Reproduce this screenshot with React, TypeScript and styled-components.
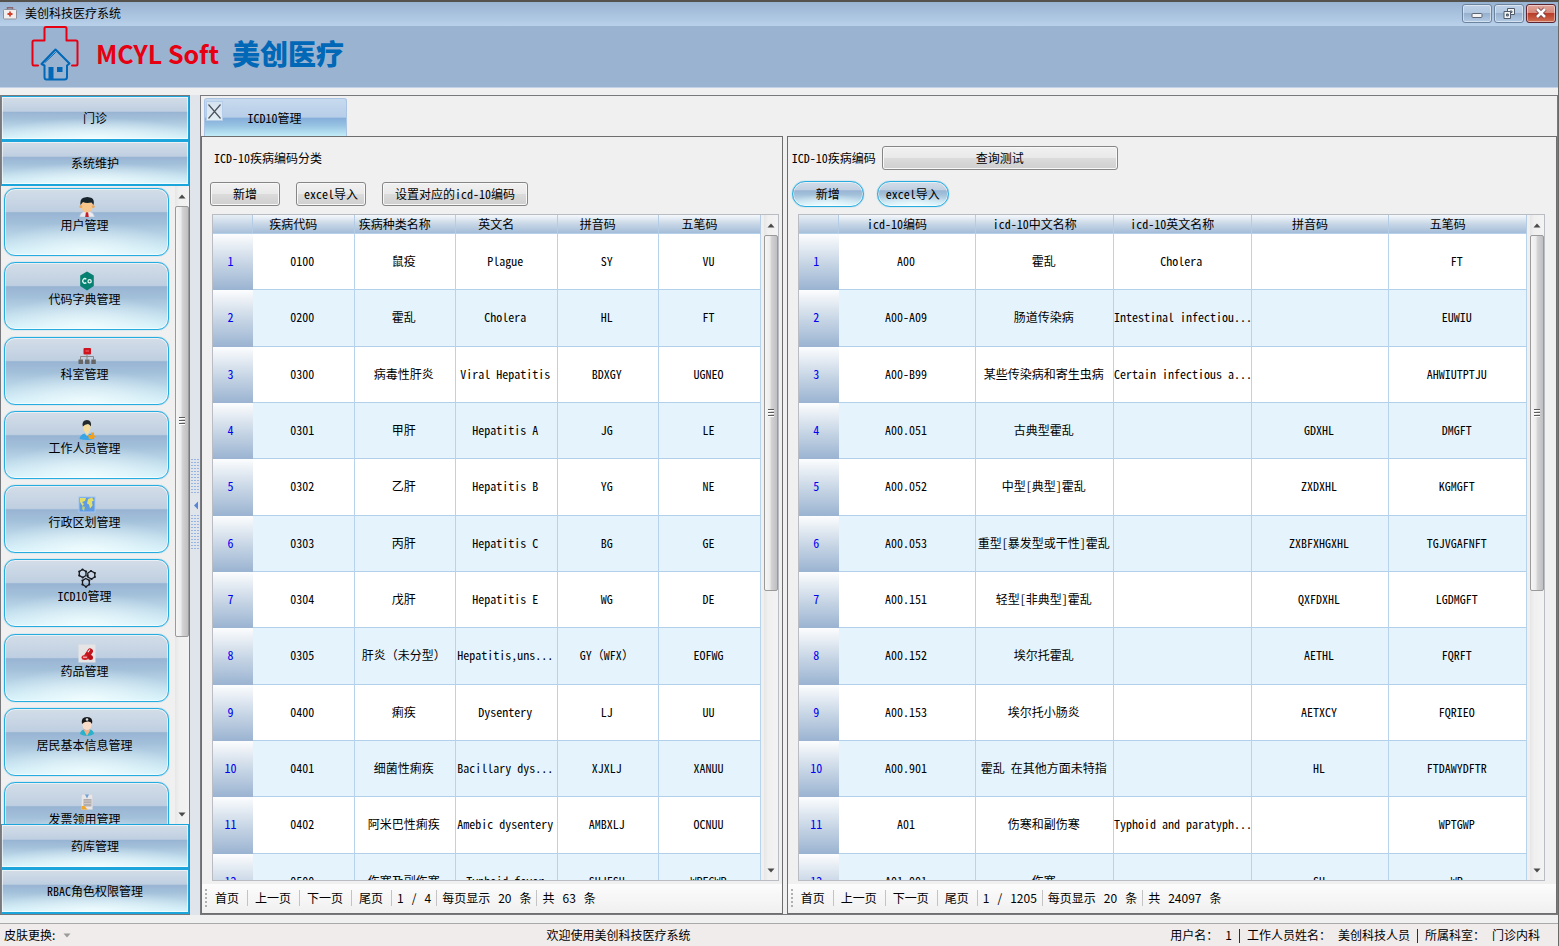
import React from "react";
import styled, { createGlobalStyle, css } from "styled-components";

const GlobalStyle = createGlobalStyle`
  *, *::before, *::after { box-sizing: border-box; }
  html, body { margin: 0; padding: 0; }
  body, button {
    font-family: "Noto Sans CJK SC", "Liberation Sans", sans-serif;
    font-size: 12px;
    line-height: 16px;
    color: #000;
  }
  body { background: #f0f0f0; }
  button { margin: 0; padding: 0; border: 0; background: none; white-space: nowrap; cursor: pointer; }
  svg { display: block; flex: none; }
`;

const halfWidth = css`
  font-feature-settings: "hwid" 1;
`;

const glossy = css`
  background:
    radial-gradient(ellipse 60% 50% at 50% 100%, rgba(245, 255, 255, 0.85), rgba(245, 255, 255, 0)),
    linear-gradient(#d3dde8 0%, #bfcfe1 34%, #98b4d3 36%, #a3c0da 52%, #bfdcec 78%, #d4f2fb 100%);
`;

const Window = styled.div`
  height: 100vh;
  display: flex;
  flex-direction: column;
  overflow: hidden;
  border-top: 2px solid #55524e;
  border-right: 1px solid #6b6a68;
`;

const TitleBar = styled.header`
  flex: none;
  height: 24px;
  display: flex;
  align-items: center;
  padding: 0 2px 2px 3px;
  background: linear-gradient(#99b3d2, #b9d1ea);
`;

const TitleText = styled.span`
  flex: 1;
  margin-left: 8px;
`;

const WindowButtons = styled.div`
  display: flex;
  gap: 2px;
`;

const WindowButton = styled.button<{ $danger?: boolean }>`
  width: 30px;
  height: 19px;
  display: flex;
  align-items: center;
  justify-content: center;
  border: 1px solid ${(p) => (p.$danger ? "#5e2430" : "#6c84a0")};
  border-radius: 3px;
  box-shadow: inset 0 0 0 1px rgba(255, 255, 255, 0.45);
  background: ${(p) =>
    p.$danger
      ? "linear-gradient(#e0a59c 0%, #d68a7c 45%, #b93d28 50%, #cf7054 100%)"
      : "linear-gradient(#bdd0e6 0%, #b3c9e2 45%, #96b0ce 50%, #b3cbe4 100%)"};
`;

const Banner = styled.div`
  flex: none;
  height: 62px;
  display: flex;
  align-items: flex-start;
  padding-left: 31px;
  background: #9ab3d1;
  border-bottom: 1px solid #c3d2e6;
`;

const BrandLatin = styled.span`
  width: 120px;
  margin: 8px 0 0 17px;
  font-size: 25px;
  line-height: 38px;
  font-weight: bold;
  white-space: nowrap;
  color: #e60012;
`;

const BrandName = styled.span`
  margin: 8px 0 0 16px;
  font-size: 28px;
  line-height: 38px;
  font-weight: 900;
  color: #0068b7;
`;

const Body = styled.div`
  flex: 1;
  min-height: 0;
  display: flex;
  padding: 7px 0 8px;
`;

const Sidebar = styled.nav`
  flex: none;
  width: 190px;
  display: flex;
  flex-direction: column;
  border: 1px solid #77797c;
`;

const GroupButton = styled.button`
  ${glossy}
  ${halfWidth}
  flex: none;
  height: 45px;
  border: 1px solid #1ba5da;
  border-bottom-width: 2px;
  box-shadow: inset 0 0 0 1px rgba(255, 255, 255, 0.6);
`;

const GroupContent = styled.div`
  flex: 1;
  min-height: 0;
  display: flex;
  overflow: hidden;
`;

const ModuleClip = styled.div`
  flex: 1;
  min-width: 0;
  overflow: hidden;
  padding: 2px 6px 0 3px;
`;

const ModuleList = styled.div`
  height: 662px;
  display: flex;
  flex-direction: column;
  justify-content: space-between;
`;

const ModuleButton = styled.button`
  ${glossy}
  ${halfWidth}
  flex: none;
  width: 100%;
  height: 68px;
  display: flex;
  flex-direction: column;
  align-items: center;
  padding: 8px 4px 0 0;
  border: 1px solid #27ace0;
  border-radius: 11px;
  box-shadow: inset 0 0 0 1px rgba(255, 255, 255, 0.55), 0 0 1px #27ace0;

  svg { margin-left: 4px; }
`;

const ScrollTrack = styled.div`
  flex: none;
  width: 14px;
  display: flex;
  flex-direction: column;
  background: linear-gradient(90deg, #e6e6e6, #f0f0f0 30%, #f3f3f3);
`;

const ScrollArrow = styled.button`
  height: 20px;
  display: flex;
  align-items: center;
  justify-content: center;
`;

const ScrollRail = styled.div`
  flex: 1;
  min-height: 0;
`;

const ScrollThumb = styled.div<{ $share: number }>`
  height: ${(p) => p.$share}%;
  display: flex;
  align-items: center;
  justify-content: center;
  border: 1px solid #9a9a9a;
  border-radius: 2px;
  background: linear-gradient(90deg, #f6f6f6 0%, #ececec 40%, #d2d2d4 55%, #bfbfc1 100%);
`;

const Splitter = styled.div`
  flex: none;
  width: 10px;
  display: flex;
  align-items: center;
  justify-content: center;
  background: #dfe5ea;
`;

const Workspace = styled.main`
  flex: 1;
  min-width: 0;
  display: flex;
  flex-direction: column;
  border: 1px solid #77797c;
`;

const TabStrip = styled.div`
  flex: none;
  height: 40px;
  display: flex;
  align-items: flex-end;
  padding-left: 3px;
`;

const Tab = styled.div`
  width: 143px;
  height: 38px;
  display: flex;
  align-items: flex-start;
  padding: 2px 0 0 1px;
  border: 1px solid #a9c4e4;
  border-bottom: 0;
  border-radius: 3px 3px 0 0;
  background: linear-gradient(#c7daee 0%, #b7cee9 49%, #86aedb 52%, #97c3e2 72%, #c2ecf6 100%);
`;

const TabClose = styled.button`
  width: 17px;
  height: 20px;
  display: flex;
  align-items: center;
  justify-content: center;
  border: 1px solid #b5cde8;
  background: linear-gradient(#d5e3f0, #e3edf4);
`;

const TabLabel = styled.button`
  ${halfWidth}
  flex: 1;
  height: 34px;
  padding-right: 20px;
`;

const Panels = styled.div`
  flex: 1;
  min-height: 0;
  display: flex;
  gap: 4px;
`;

const Panel = styled.section<{ $grow: number }>`
  flex: ${(p) => p.$grow} 1 0;
  min-width: 0;
  display: flex;
  flex-direction: column;
  border: 1px solid #6e6e6e;
`;

const PanelHead = styled.div<{ $inset: number }>`
  ${halfWidth}
  flex: none;
  height: 42px;
  display: flex;
  align-items: center;
  gap: 6px;
  padding-left: ${(p) => p.$inset}px;
`;

const PanelTitle = styled.h2`
  margin: 0;
  font-size: 12px;
  line-height: 16px;
  font-weight: normal;
`;

const Actions = styled.div<{ $inset: number; $gap: number }>`
  flex: none;
  height: 35px;
  display: flex;
  align-items: flex-start;
  gap: ${(p) => p.$gap}px;
  padding: 2px 0 0 ${(p) => p.$inset}px;
`;

const PlainButton = styled.button<{ $width: number }>`
  ${halfWidth}
  width: ${(p) => p.$width}px;
  height: 24px;
  margin: 1px 0;
  border: 1px solid #868686;
  border-radius: 3px;
  box-shadow: inset 0 0 0 1px #f8f8f8;
  background: linear-gradient(#f1f1f1 0%, #e9e9e9 48%, #dbdbdb 52%, #cfcfcf 100%);
`;

const PillButton = styled.button`
  ${glossy}
  ${halfWidth}
  width: 72px;
  height: 26px;
  border: 1px solid #27ace0;
  border-radius: 13px;
  box-shadow: inset 0 0 0 1px rgba(255, 255, 255, 0.5), 0 0 1px #27ace0;
`;

const GridBox = styled.div<{ $right: number }>`
  flex: 1;
  min-height: 0;
  display: flex;
  gap: 3px;
  overflow: hidden;
  margin: 0 ${(p) => p.$right}px 0 10px;
  border: 1px solid #b9bcc2;
`;

const GridClip = styled.div`
  flex: 1;
  min-width: 0;
  overflow: hidden;
`;

const Grid = styled.table`
  ${halfWidth}
  width: 100%;
  height: 695px;
  table-layout: fixed;
  border-collapse: separate;
  border-spacing: 0;
  text-align: center;
  white-space: nowrap;

  th, td { padding: 0 2px 1px 0; font-weight: normal; }
  td { border-right: 1px solid #b9d3ec; border-bottom: 1px solid #b3d0ea; }
  tbody tr { height: 56px; background: #fff; }
  tbody tr:nth-child(even) { background: #e5f4fc; }
`;

const IndexCol = styled.col`
  width: 40px;
`;

const ColumnHead = styled.th<{ $corner?: boolean }>`
  height: 19px;
  line-height: 16px;
  border-right: 1px solid #b4cce6;
  border-bottom: 1px solid #b4d0ea;
  background: ${(p) => (p.$corner ? "linear-gradient(#e6eef5, #a9c0da)" : "linear-gradient(#f6f9fc 0%, #cbd9e8 45%, #a4bdd8 100%)")};

  && { padding-right: 20px; }
`;

const RowHead = styled.th`
  color: #0000f0;
  background: linear-gradient(#fcfdfe 0%, #c9d7e6 50%, #9ab3d1 100%);

  && { padding: 0 5px 2px 0; }
`;

const FullWidth = styled.span`
  font-feature-settings: normal;
`;

const Pager = styled.div`
  flex: none;
  height: 29px;
  margin-top: 3px;
  display: flex;
  align-items: center;
  padding: 0 0 2px 3px;
  background: linear-gradient(#fcfcfc, #f0f0f0);
`;

const PagerItem = styled.span`
  display: flex;
  gap: 8px;
  padding: 0 5px;
  white-space: nowrap;
  border-left: 1px solid #c4c4c4;
`;

const PagerButton = styled.button<{ $first?: boolean }>`
  padding: 0 8px 0 7px;
  border-left: ${(p) => (p.$first ? "0" : "1px solid #c4c4c4")};
`;

const StatusBar = styled.footer`
  flex: none;
  height: 23px;
  display: grid;
  grid-template-columns: 35% auto 1fr;
  align-items: center;
  padding: 0 18px 0 4px;
  border-top: 1px solid #a9a9a9;
  background: #f0eceb;
`;

const SkinButton = styled.button`
  display: flex;
  align-items: center;
  justify-self: start;
  gap: 8px;
`;

const Welcome = styled.span`
  padding-left: 5px;
`;

const UserInfo = styled.div`
  display: flex;
  justify-content: flex-end;
  gap: 7px;
  white-space: nowrap;
`;

const UserField = styled.span`
  display: flex;
  gap: 7px;

  & + & { padding-left: 8px; position: relative; }
  & + &::before { content: ""; position: absolute; left: 0; top: 2px; height: 14px; border-left: 1px solid #3c2440; }
`;

function AppIcon() {
  return (
    <svg width="14" height="14" viewBox="0 0 14 14">
      <path d="M4.5 4V1.8h5V4" fill="none" stroke="#8c6670" strokeWidth="1.4" />
      <rect x="0.5" y="3.5" width="13" height="9.5" rx="1" fill="#f1efee" stroke="#8d929c" />
      <path d="M7 5.500v5M4.500 8h5" stroke="#d2402c" strokeWidth="1.800" />
    </svg>
  );
}

function BrandMark() {
  return (
    <svg width="48" height="56" viewBox="0 0 48 56" fill="none" strokeLinejoin="round" strokeLinecap="round">
      <path d="M7 39.5H2.800Q1.500 39.500 1.500 38V16Q1.500 14.500 3 14.500H13.500V2.500Q13.500 1 15 1H34Q35.500 1 35.500 2.500V14.500H45Q46.500 14.500 46.500 16V38Q46.500 39.500 45 39.500H41" stroke="#e60012" strokeWidth="2" />
      <path d="M10.500 38L24.500 23.500L38.500 37.500L36 39.500V51Q36 53.500 33.500 53.500H15.500Q13.500 53.500 13.500 51V39.500Z" stroke="#0068b7" strokeWidth="2" />
      <path d="M14 36.500L24.500 26.500" stroke="#0068b7" strokeWidth="1" />
      <path d="M17.500 41H22.500V53H17.500ZM26 41H31.500V46H26Z" fill="#0068b7" />
    </svg>
  );
}

function MinimizeIcon() {
  return (
    <svg width="12" height="12" viewBox="0 0 12 12">
      <rect x="1" y="6.500" width="10" height="4" rx="1" fill="#f4f4f4" stroke="#5d6672" />
    </svg>
  );
}

function RestoreIcon() {
  return (
    <svg width="14" height="13" viewBox="0 0 14 13" fill="#f4f4f4" stroke="#515c6b">
      <path d="M5.500 1.500h7v6h-7zM8 4h2v1.500H8z" fillRule="evenodd" />
      <path d="M2 4.500h6.500v7H2zM4.500 7h1.800v2H4.500z" fillRule="evenodd" />
    </svg>
  );
}

function CloseIcon() {
  return (
    <svg width="14" height="12" viewBox="0 0 14 12">
      <path d="M3 2l8 8M11 2l-8 8" stroke="#6a3a40" strokeWidth="4.200" />
      <path d="M3 2l8 8M11 2l-8 8" stroke="#fff" strokeWidth="2.600" />
    </svg>
  );
}

function Triangle({ dir, color = "#4a4a4a" }: { dir: "up" | "down"; color?: string }) {
  return (
    <svg width="8" height="5" viewBox="0 0 8 5">
      <path d={dir === "up" ? "M0.500 4.500L4 0.500L7.500 4.500Z" : "M0.500 0.500H7.500L4 4.500Z"} fill={color} />
    </svg>
  );
}

function Grip() {
  return (
    <svg width="8" height="9" viewBox="0 0 8 9" stroke="#5c5c5c">
      <path d="M1 0.500h6M1 3.500h6M1 6.500h6" />
      <path d="M1 1.500h6M1 4.500h6M1 7.500h6" stroke="#fff" />
    </svg>
  );
}

function SplitterHandle() {
  const rows = (from: number, count: number) =>
    Array.from({ length: count }, (_, i) => (
      <path key={from + i} d={`M0 ${from + i * 3 + 0.5}h8`} strokeDasharray="2 1" />
    ));
  return (
    <svg width="8" height="92" viewBox="0 0 8 92" stroke="#98b4e4">
      {rows(0, 12)}
      <path d="M7 42.500v8L3 46.500Z" fill="#5a84d4" stroke="none" />
      {rows(56, 12)}
    </svg>
  );
}

function PagerGrip() {
  return (
    <svg width="3" height="18" viewBox="0 0 3 18" fill="#b0b0b0">
      {[0, 4, 8, 12, 16].map((y) => (
        <rect key={y} width="2" height="2" y={y} />
      ))}
    </svg>
  );
}

const moduleIcons: Record<string, React.ReactNode> = {
  user: (
    <>
      <path d="M1.500 20Q2 15.500 6 14.500h6Q16 15.500 16.500 20Z" fill="#e9ebf2" stroke="#b5bac8" strokeWidth="0.500" />
      <path d="M8 14.500h2l0.800 5.500H7.200Z" fill="#c4202c" />
      <ellipse cx="9" cy="9" rx="6" ry="6.500" fill="#f6c68c" />
      <circle cx="2.800" cy="9.500" r="1.500" fill="#e9a860" />
      <circle cx="15.200" cy="9.500" r="1.500" fill="#e9a860" />
      <path d="M2.500 8Q1.500 0.500 8 0.300Q9 -0.300 12 0.500Q17 1.500 15.500 8L13.500 5.500Q8 6.500 5 5Z" fill="#17242c" />
    </>
  ),
  code: (
    <>
      <path d="M9 0.500L15.800 4.500V15L9 19.500L2.200 15V4.500Z" fill="#068070" />
      <path d="M8.300 8.200A2.200 2.200 0 1 0 8.300 11.600" fill="none" stroke="#e5f6f2" strokeWidth="1.400" />
      <circle cx="11.600" cy="10.300" r="1.600" fill="none" stroke="#e5f6f2" strokeWidth="1.300" />
    </>
  ),
  org: (
    <>
      <rect x="5.500" y="2" width="7.500" height="6.500" rx="1" fill="#cf1420" />
      <path d="M7.500 5h3.500" stroke="#ee6a70" />
      <path d="M9 8.500v5M2.500 13.500v-3h13v3" fill="none" stroke="#888" />
      <path d="M0.500 13.500h4.500v4.500H0.500zM7 13.500h4.500v4.500H7zM13.300 13.500h4.500v4.500h-4.500z" fill="#676767" />
    </>
  ),
  staff: (
    <>
      <path d="M1.500 19Q2 14.500 6.500 13.500L9 16L12 13.500Q16 14.500 16 19Q9 21 1.500 19Z" fill="#3aa5e6" />
      <path d="M5 5.500Q5 12 9 13.500Q13 12 12.500 5.500Q9 3 5 5.500Z" fill="#f6dc9a" />
      <path d="M7.500 12h3.500l-2 4Z" fill="#f6dc9a" />
      <path d="M4.800 6.500Q3.500 0 9 0Q14 0 12.800 6.500Q11.500 4 10 4Q7 4 4.800 6.500Z" fill="#232a2c" />
      <path d="M10 15h3v-2.500h3V15l1.500 1.500L15 19h-4Z" fill="#f0a020" />
    </>
  ),
  map: (
    <>
      <rect x="1" y="3" width="16" height="15" fill="#5f9be2" stroke="#a5c6ee" />
      <path d="M2 4h6l-1 3-3 1 2 2-1.500 2L2 8zM10 5l4-1.500 2 3-2 1 0.500 4-2.500 3-1-4-2-1z" fill="#e4df68" />
      <path d="M4.500 12l2.500 1-1 4-2-2z" fill="#b9d27a" />
    </>
  ),
  molecule: (
    <g fill="none" stroke="#16191c" strokeWidth="1.300">
      <path d="M4.500 1.500L8 3.500V7.500L4.800 9.500L1.300 7.500V3.500Z" />
      <path d="M13 3L16.800 5V9L13.500 11L9.800 9V5Z" />
      <path d="M7.800 10.500L11.300 12.500V16.500L8 18.800L4.500 16.500V12.500Z" />
      <g fill="#16191c" stroke="none">
        {[[4.500, 1.500], [8, 3.500], [1.300, 3.500], [1.300, 7.500], [4.800, 9.500], [13, 3], [16.800, 5], [16.800, 9], [13.500, 11], [9.500, 8], [11.300, 12.500], [11.300, 16.500], [8, 18.800], [4.500, 16.500], [4.500, 12.500]].map(([x, y]) => (
          <circle key={`${x}-${y}`} cx={x} cy={y} r="1.100" />
        ))}
      </g>
    </g>
  ),
  pill: (
    <>
      <rect x="0.500" y="1.500" width="17" height="18" fill="#e6e4e4" />
      <g transform="rotate(35 10 10)">
        <rect x="8" y="4.500" width="5.500" height="11" rx="2.700" fill="#c4141e" />
        <path d="M9.500 6v3.500" stroke="#fff" />
      </g>
      <ellipse cx="7" cy="14.500" rx="3.500" ry="2.500" fill="#d0242c" />
      <ellipse cx="12.500" cy="14.500" rx="2.500" ry="2.500" fill="#b80f18" />
      <path d="M5 14.200h4" stroke="#f6dada" />
    </>
  ),
  resident: (
    <>
      <path d="M2 17Q2.500 13 6 12.500h6Q15.500 13 16 17Q9 21 2 17Z" fill="#28b2cc" />
      <path d="M5.500 12.500L9 19L12.500 12.500Z" fill="#f4b088" />
      <ellipse cx="9" cy="7.500" rx="4.500" ry="5.500" fill="#f8dcc8" />
      <path d="M4 7Q2.500 0 9 0Q15.500 0 14 7Q13 4 9.500 4.500Q6 4.500 4 7Z" fill="#181818" />
      <circle cx="9" cy="2.500" r="1.300" fill="#d6e2ea" />
    </>
  ),
  invoice: (
    <>
      <rect x="3.500" y="3.500" width="11" height="15" fill="#e9e6e8" stroke="#cfd0d8" strokeWidth="0.500" />
      <path d="M7 3.500h4L9 7.500Z" fill="#6fa0d6" />
      <rect x="5.500" y="8" width="8" height="7.500" fill="#b2aeb0" />
      <path d="M6 10h7M6 12.500h7" stroke="#d8d0cc" strokeWidth="0.700" />
      <path d="M3.500 15h3l3 3.500h-6Z" fill="#f0a52c" />
    </>
  ),
};

const modules: [string, string][] = [
  ["user", "用户管理"],
  ["code", "代码字典管理"],
  ["org", "科室管理"],
  ["staff", "工作人员管理"],
  ["map", "行政区划管理"],
  ["molecule", "ICD10管理"],
  ["pill", "药品管理"],
  ["resident", "居民基本信息管理"],
  ["invoice", "发票领用管理"],
];

const categoryColumns = ["疾病代码", "疾病种类名称", "英文名", "拼音码", "五笔码"];
const categoryRows = [
  ["0100", "鼠疫", "Plague", "SY", "VU"],
  ["0200", "霍乱", "Cholera", "HL", "FT"],
  ["0300", "病毒性肝炎", "Viral Hepatitis", "BDXGY", "UGNEO"],
  ["0301", "甲肝", "Hepatitis A", "JG", "LE"],
  ["0302", "乙肝", "Hepatitis B", "YG", "NE"],
  ["0303", "丙肝", "Hepatitis C", "BG", "GE"],
  ["0304", "戊肝", "Hepatitis E", "WG", "DE"],
  ["0305", "肝炎（未分型）", "Hepatitis,uns...", "GY（WFX）", "EOFWG"],
  ["0400", "痢疾", "Dysentery", "LJ", "UU"],
  ["0401", "细菌性痢疾", "Bacillary dys...", "XJXLJ", "XANUU"],
  ["0402", "阿米巴性痢疾", "Amebic dysentery", "AMBXLJ", "OCNUU"],
  ["0500", "伤寒及副伤寒", "Typhoid fever", "SHJFSH", "WPEGWP"],
];

const codeColumns = ["icd-10编码", "icd-10中文名称", "icd-10英文名称", "拼音码", "五笔码"];
const codeRows = [
  ["A00", "霍乱", "Cholera", "", "FT"],
  ["A00-A09", "肠道传染病", "Intestinal infectiou...", "", "EUWIU"],
  ["A00-B99", "某些传染病和寄生虫病", "Certain infectious a...", "", "AHWIUTPTJU"],
  ["A00.051", "古典型霍乱", "", "GDXHL", "DMGFT"],
  ["A00.052", "中型[典型]霍乱", "", "ZXDXHL", "KGMGFT"],
  ["A00.053", "重型[暴发型或干性]霍乱", "", "ZXBFXHGXHL", "TGJVGAFNFT"],
  ["A00.151", "轻型[非典型]霍乱", "", "QXFDXHL", "LGDMGFT"],
  ["A00.152", "埃尔托霍乱", "", "AETHL", "FQRFT"],
  ["A00.153", "埃尔托小肠炎", "", "AETXCY", "FQRIEO"],
  ["A00.901", "霍乱 在其他方面未特指", "", "HL", "FTDAWYDFTR"],
  ["A01", "伤寒和副伤寒", "Typhoid and paratyph...", "", "WPTGWP"],
  ["A01.001", "伤寒", "", "SH", "WP"],
];

function ScrollBar({ share }: { share: number }) {
  return (
    <ScrollTrack>
      <ScrollArrow aria-label="向上滚动">
        <Triangle dir="up" />
      </ScrollArrow>
      <ScrollRail>
        <ScrollThumb $share={share}>
          <Grip />
        </ScrollThumb>
      </ScrollRail>
      <ScrollArrow aria-label="向下滚动">
        <Triangle dir="down" />
      </ScrollArrow>
    </ScrollTrack>
  );
}

/* Brackets such as （ ） keep their full width inside half-width cells. */
function CellText({ text }: { text: string }) {
  return (
    <>
      {text.split(/([（）])/).map((part, i) =>
        part === "（" || part === "）" ? <FullWidth key={i}>{part}</FullWidth> : part
      )}
    </>
  );
}

function DataGrid({ columns, rows, right }: { columns: string[]; rows: string[][]; right: number }) {
  return (
    <GridBox $right={right}>
      <GridClip>
        <Grid>
          <colgroup>
            <IndexCol />
            {columns.map((c) => (
              <col key={c} />
            ))}
          </colgroup>
          <thead>
            <tr>
              <ColumnHead $corner />
              {columns.map((c) => (
                <ColumnHead key={c} scope="col">{c}</ColumnHead>
              ))}
            </tr>
          </thead>
          <tbody>
            {rows.map((row, i) => (
              <tr key={row[0]}>
                <RowHead scope="row">{i + 1}</RowHead>
                {row.map((cell, j) => (
                  <td key={j}><CellText text={cell} /></td>
                ))}
              </tr>
            ))}
          </tbody>
        </Grid>
      </GridClip>
      <ScrollBar share={57} />
    </GridBox>
  );
}

function PagerBar({ pages, total }: { pages: string; total: string }) {
  return (
    <Pager>
      <PagerGrip />
      <PagerButton $first>首页</PagerButton>
      <PagerButton>上一页</PagerButton>
      <PagerButton>下一页</PagerButton>
      <PagerButton>尾页</PagerButton>
      <PagerItem>
        <span>1</span>
        <span>/</span>
        <span>{pages}</span>
      </PagerItem>
      <PagerItem>
        <span>每页显示</span>
        <span>20</span>
        <span>条</span>
      </PagerItem>
      <PagerItem>
        <span>共</span>
        <span>{total}</span>
        <span>条</span>
      </PagerItem>
    </Pager>
  );
}

export default function App() {
  return (
    <>
      <GlobalStyle />
      <Window>
        <TitleBar>
          <AppIcon />
          <TitleText>美创科技医疗系统</TitleText>
          <WindowButtons>
            <WindowButton aria-label="最小化"><MinimizeIcon /></WindowButton>
            <WindowButton aria-label="还原"><RestoreIcon /></WindowButton>
            <WindowButton aria-label="关闭" $danger><CloseIcon /></WindowButton>
          </WindowButtons>
        </TitleBar>
        <Banner>
          <BrandMark />
          <BrandLatin>MCYL Soft</BrandLatin>
          <BrandName>美创医疗</BrandName>
        </Banner>
        <Body>
          <Sidebar>
            <GroupButton>门诊</GroupButton>
            <GroupButton>系统维护</GroupButton>
            <GroupContent>
              <ModuleClip>
                <ModuleList>
                  {modules.map(([icon, label]) => (
                    <ModuleButton key={icon}>
                      <svg width="18" height="20" viewBox="0 0 18 20">{moduleIcons[icon]}</svg>
                      {label}
                    </ModuleButton>
                  ))}
                </ModuleList>
              </ModuleClip>
              <ScrollBar share={72} />
            </GroupContent>
            <GroupButton>药库管理</GroupButton>
            <GroupButton>RBAC角色权限管理</GroupButton>
          </Sidebar>
          <Splitter>
            <SplitterHandle />
          </Splitter>
          <Workspace>
            <TabStrip>
              <Tab>
                <TabClose aria-label="关闭标签">
                  <svg width="13" height="15" viewBox="0 0 13 15">
                    <path d="M0.500 0.500L12.500 14.500M12.500 0.500L0.500 14.500" stroke="#4c5258" strokeWidth="1.200" />
                  </svg>
                </TabClose>
                <TabLabel>ICD10管理</TabLabel>
              </Tab>
            </TabStrip>
            <Panels>
              <Panel $grow={581}>
                <PanelHead $inset={12}>
                  <PanelTitle>ICD-10疾病编码分类</PanelTitle>
                </PanelHead>
                <Actions $inset={8} $gap={16}>
                  <PlainButton $width={70}>新增</PlainButton>
                  <PlainButton $width={70}>excel导入</PlainButton>
                  <PlainButton $width={146}>设置对应的icd-10编码</PlainButton>
                </Actions>
                <DataGrid columns={categoryColumns} rows={categoryRows} right={3} />
                <PagerBar pages="4" total="63" />
              </Panel>
              <Panel $grow={770}>
                <PanelHead $inset={4}>
                  <PanelTitle>ICD-10疾病编码</PanelTitle>
                  <PlainButton $width={236}>查询测试</PlainButton>
                </PanelHead>
                <Actions $inset={4} $gap={13}>
                  <PillButton>新增</PillButton>
                  <PillButton>excel导入</PillButton>
                </Actions>
                <DataGrid columns={codeColumns} rows={codeRows} right={11} />
                <PagerBar pages="1205" total="24097" />
              </Panel>
            </Panels>
          </Workspace>
        </Body>
        <StatusBar>
          <SkinButton>
            皮肤更换:
            <Triangle dir="down" color="#9a9a9a" />
          </SkinButton>
          <Welcome>欢迎使用美创科技医疗系统</Welcome>
          <UserInfo>
            <UserField><span>用户名：</span><span>1</span></UserField>
            <UserField><span>工作人员姓名：</span><span>美创科技人员</span></UserField>
            <UserField><span>所属科室：</span><span>门诊内科</span></UserField>
          </UserInfo>
        </StatusBar>
      </Window>
    </>
  );
}
